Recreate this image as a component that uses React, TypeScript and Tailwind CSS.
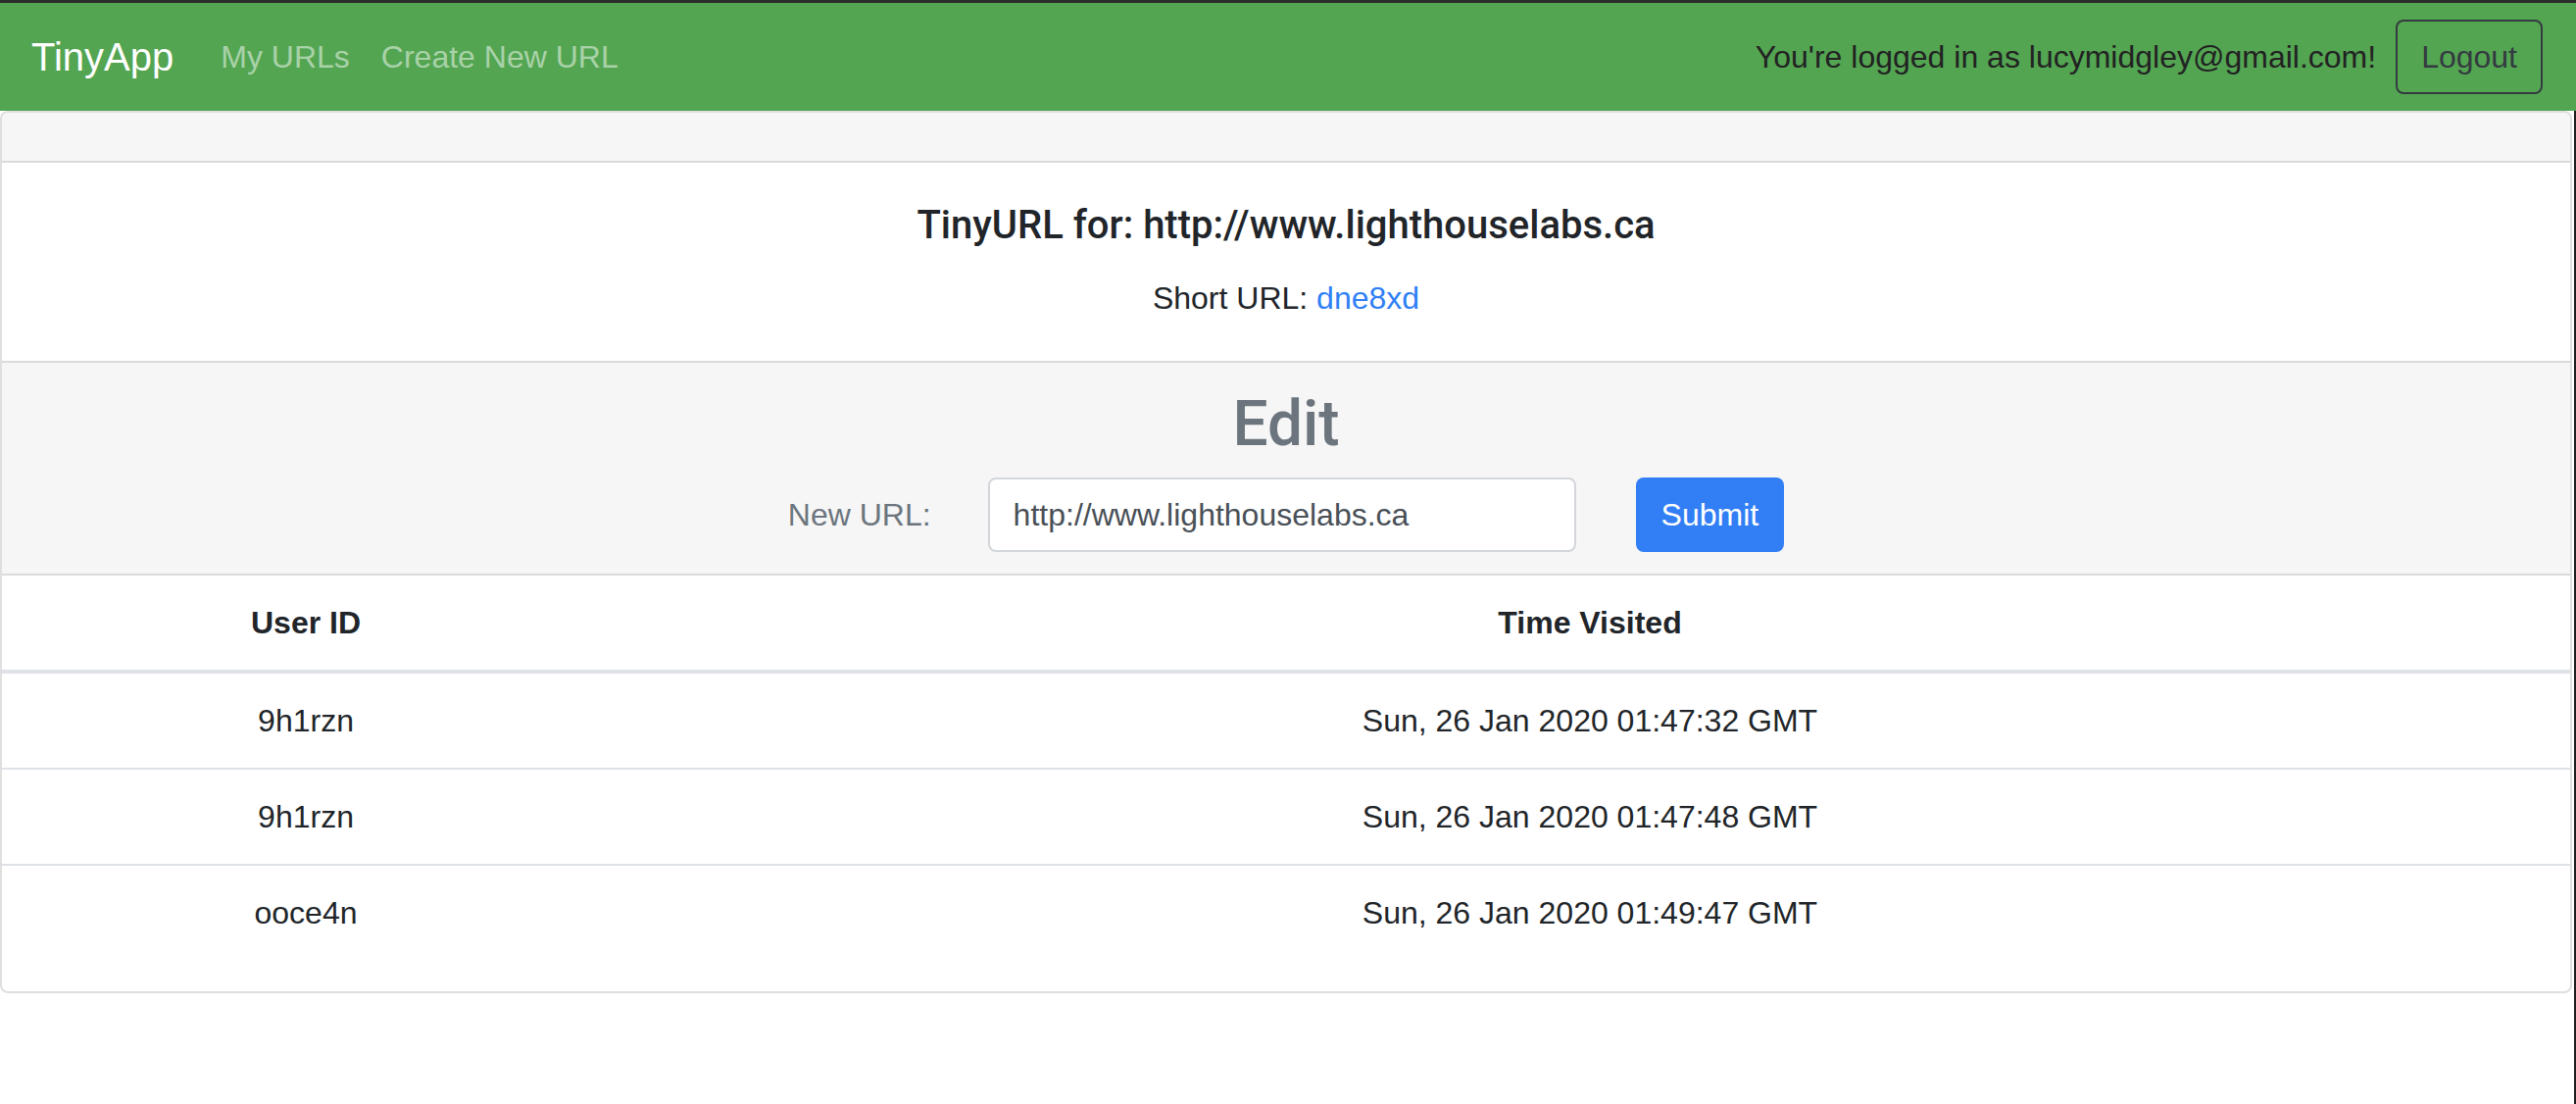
const visits = [
  { id: "9h1rzn", time: "Sun, 26 Jan 2020 01:47:32 GMT" },
  { id: "9h1rzn", time: "Sun, 26 Jan 2020 01:47:48 GMT" },
  { id: "ooce4n", time: "Sun, 26 Jan 2020 01:49:47 GMT" },
];

const headingFont = { fontFamily: 'Roboto, "Liberation Sans", Arial, sans-serif' };

const Nav = () => {
  return (
    <nav className="flex h-[110px] shrink-0 items-center justify-between bg-[#53a552] px-8">
      <div className="flex items-center">
        <a href="#" className="mr-8 text-[40px] leading-[60px] text-white">
          TinyApp
        </a>
        <a href="#" className="px-4 text-[32px] leading-[48px] text-white/50">
          My URLs
        </a>
        <a href="#" className="px-4 text-[32px] leading-[48px] text-white/50">
          Create New URL
        </a>
      </div>
      <div className="flex items-center gap-[20px]">
        <span className="text-[32px] leading-[48px] text-[#222222]">
          You're logged in as lucymidgley@gmail.com!
        </span>
        <button className="mr-[2px] h-[76px] rounded-lg border-2 border-[#343a40] px-6 text-[32px] leading-[48px] text-[#343a40]">
          Logout
        </button>
      </div>
    </nav>
  );
};

export default function App() {
  return (
    <div
      className="flex min-h-screen w-full flex-col border-t-[3px] border-[#2b2b2b] bg-white text-[#212529]"
      style={{ fontFamily: '"Liberation Sans", Arial, sans-serif' }}
    >
      <Nav />
      <div className="flex-1 border-r-2 border-[#1e1e1e] pr-[2px]">
        <div className="overflow-hidden rounded-lg border-2 border-[#dfdfdf]">
          {/* empty card header */}
          <div className="h-[51px] border-b-2 border-[#dadada] bg-[#f6f6f6]" />

          <div className="px-10 pt-10 pb-10 text-center">
            <h5 className="mb-[26px] text-[40px] font-medium leading-[48px]" style={headingFont}>
              TinyURL for: http://www.lighthouselabs.ca
            </h5>
            <p className="text-[32px] leading-[48px]">
              Short URL:{" "}
              <a href="#" className="text-[#2f7ff5]">
                dne8xd
              </a>
            </p>
          </div>

          <div className="border-y-2 border-[#dadada] bg-[#f6f6f6] pt-6 pb-[22px]">
            <h2
              className="mb-4 text-center text-[64px] font-medium leading-[77px] text-[#6c757d]"
              style={headingFont}
            >
              Edit
            </h2>
            <form className="flex items-center justify-center">
              <label className="mr-[58px] text-[32px] leading-[48px] text-[#6c757d]">
                New URL:
              </label>
              <input
                type="text"
                defaultValue="http://www.lighthouselabs.ca"
                className="h-[76px] w-[600px] rounded-lg border-2 border-[#d3d6da] bg-white px-6 text-[32px] text-[#495057] outline-none"
              />
              <button
                type="button"
                className="ml-[61px] h-[76px] rounded-lg border-2 border-transparent bg-[#317ef5] px-6 text-[32px] leading-[48px] text-white"
              >
                Submit
              </button>
            </form>
          </div>

          <table className="mb-8 w-full border-collapse text-center text-[32px] leading-[48px]">
            <thead>
              <tr className="border-b-4 border-[#dee2e6]">
                <th className="w-[620px] py-6 font-bold">User ID</th>
                <th className="py-6 font-bold">Time Visited</th>
              </tr>
            </thead>
            <tbody>
              {visits.map((v, i) => (
                <tr key={i} className={i > 0 ? "border-t-2 border-[#dee2e6]" : ""}>
                  <td className="py-6">{v.id}</td>
                  <td className="py-6">{v.time}</td>
                </tr>
              ))}
            </tbody>
          </table>
        </div>
      </div>
    </div>
  );
}
